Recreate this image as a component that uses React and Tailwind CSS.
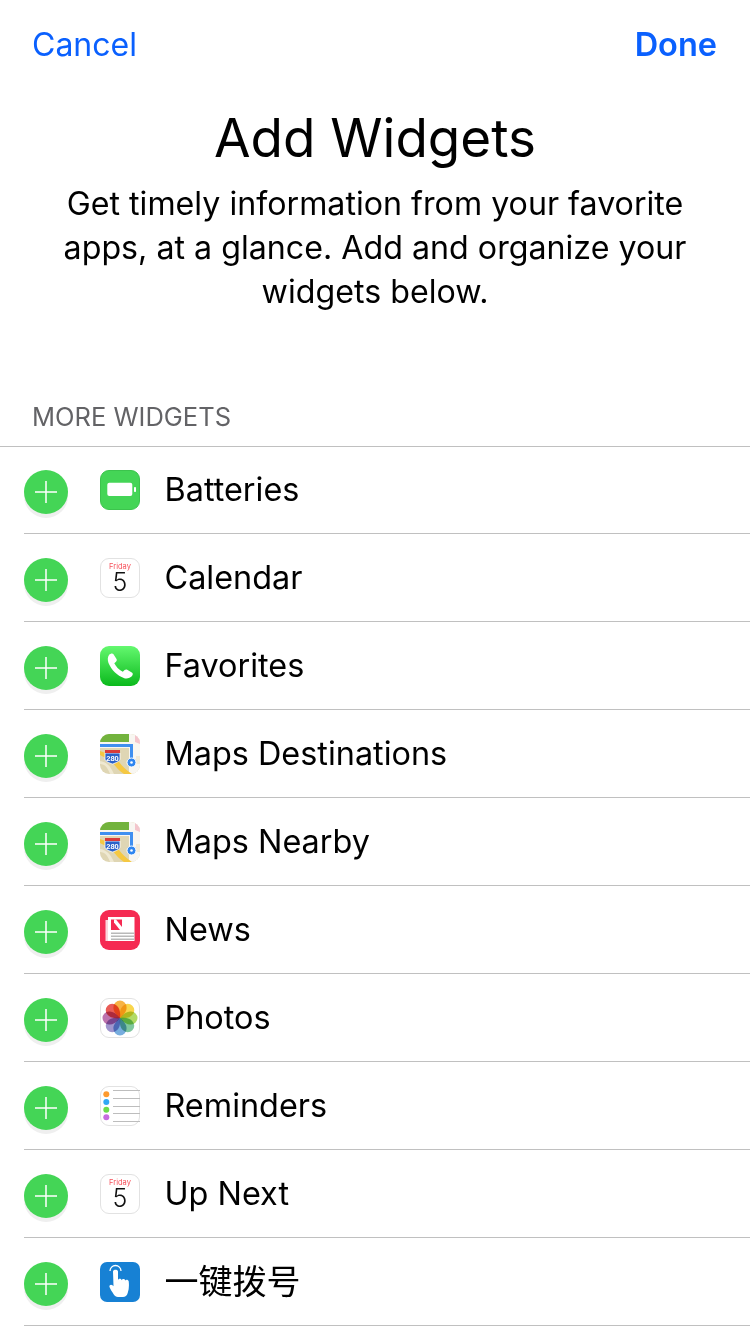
function Batteries() {
  return (
    <svg width="40" height="40" viewBox="0 0 40 40">
      <rect x="0.500" y="0.500" width="39" height="39" rx="8.500" fill="#44d556" stroke="#3cc44d" />
      <rect x="7.300" y="12.700" width="25" height="13.300" rx="2" fill="#fff" />
      <rect x="34" y="17" width="2" height="5" rx="0.800" fill="#fff" />
    </svg>
  );
}

function CalendarIcon() {
  return (
    <div className="w-10 h-10 rounded-[9px] border border-[#e2e2e2] bg-white flex flex-col items-center">
      <span className="text-[7.5px] leading-[8px] mt-[4px] text-[#f7525c]">Friday</span>
      <span className="text-[25px] leading-[23px] font-light text-[#111]">5</span>
    </div>
  );
}

function Phone() {
  return (
    <svg width="40" height="40" viewBox="0 0 40 40">
      <defs>
        <linearGradient id="ph" x1="0" y1="0" x2="0" y2="1">
          <stop offset="0" stopColor="#64f86f" />
          <stop offset="1" stopColor="#0ab91c" />
        </linearGradient>
      </defs>
      <rect width="40" height="40" rx="9" fill="url(#ph)" />
      <path d="M9 9c1.500-1.500 3.500-2 4.500-.8l3 4.800c.6 1 .2 2-.5 2.700l-1.700 1.500c1.500 3 4.500 6.500 8.500 8.500l1.800-1.600c.8-.7 1.700-.8 2.600-.3l5 3c1 .6.7 2.300-.4 3.400-1.500 1.500-4.500 3-7.500 2C17 29.500 11.500 24 8.500 17c-1-3-1-6 .5-8z" fill="#fff" />
    </svg>
  );
}

function Maps({ id }) {
  return (
    <svg width="40" height="40" viewBox="0 0 40 40">
      <defs>
        <clipPath id={id}><rect width="40" height="40" rx="9" /></clipPath>
      </defs>
      <g clipPath={`url(#${id})`}>
        <rect width="40" height="40" fill="#dfd6b4" />
        <rect width="29" height="8" fill="#72b33d" />
        <rect x="29" width="11" height="40" fill="#f8f6f1" />
        <path d="M35 0h5v10l-5-2z" fill="#f3c5cc" />
        <path d="M36 22h4v8h-4z" fill="#f3ead6" />
        <rect y="8" width="35" height="6" fill="#f8f6f1" />
        <path d="M0 10h33v20h-3V13H0z" fill="#3f8ff0" />
        <path d="M0 21c5 3 8 3 12 7 4 5 7 9 12 12h8c-6-4-10-8-13-12-5-6-11-8-19-11z" fill="#f5c842" />
        <path d="M0 30c5 0 8 4 10 10h4c-3-7-7-12-14-13z" fill="#efe9d2" />
        <path d="M5 19h15v6c0 2-4 4-7.500 5C9 29 5 27 5 25z" fill="#2a62c9" stroke="#fff" strokeWidth="0.800" />
        <rect x="5" y="16" width="15" height="3" fill="#d83b3b" />
        <text x="12.500" y="26.500" textAnchor="middle" fontSize="7.500" fontWeight="700" fill="#fff" fontFamily="Liberation Sans">280</text>
        <circle cx="31.500" cy="28.500" r="4.500" fill="#2f86f0" stroke="#fff" strokeWidth="1" />
        <circle cx="31.500" cy="28.500" r="1.300" fill="#fff" />
      </g>
    </svg>
  );
}

function News() {
  return (
    <svg width="40" height="40" viewBox="0 0 40 40">
      <rect width="40" height="40" rx="9" fill="#f52a52" />
      <rect x="5.500" y="10" width="2.500" height="21" fill="#fbd5dc" />
      <rect x="8" y="7" width="26.500" height="24" fill="#fff" />
      <rect x="11" y="9.500" width="11" height="10.500" fill="#f52a52" />
      <path d="M14 9.500h2l6 7.500v3h-2l-6-7.500z" fill="#fff" />
      <rect x="11" y="22.500" width="23.500" height="1.500" fill="#b9b9b9" />
      <rect x="11" y="25.500" width="23.500" height="1.500" fill="#b9b9b9" />
      <rect x="11" y="28.500" width="23.500" height="1.500" fill="#b9b9b9" />
    </svg>
  );
}

const petals = [
  ['#f6a623', 0], ['#f8cf2e', 45], ['#a5d34a', 90], ['#68bd8e', 135],
  ['#5f9fd8', 180], ['#8f84c6', 225], ['#b25aa0', 270], ['#e5403a', 315],
];

function Photos() {
  return (
    <svg width="40" height="40" viewBox="0 0 40 40">
      <rect x="0.500" y="0.500" width="39" height="39" rx="8.500" fill="#fff" stroke="#e2e2e2" />
      {petals.map(([c, a]) => (
        <path key={a} d="M20 20C15 16 13 12 13.500 9A6.500 6.500 0 0 1 26.500 9C27 12 25 16 20 20z" fill={c} fillOpacity="0.85" transform={`rotate(${a} 20 20)`} style={{ mixBlendMode: 'multiply' }} />
      ))}
    </svg>
  );
}

function RemindersIcon() {
  return (
    <svg width="40" height="40" viewBox="0 0 40 40">
      <rect x="0.500" y="0.500" width="39" height="39" rx="8.500" fill="#fff" stroke="#e2e2e2" />
      {[4, 12, 20, 27, 35].map(y => <rect key={y} x="13" y={y} width="27" height="1" fill="#bdbdbd" />)}
      <circle cx="6.300" cy="8.300" r="3" fill="#fd9a2e" />
      <circle cx="6.300" cy="16" r="3" fill="#30a8f5" />
      <circle cx="6.300" cy="23.700" r="3" fill="#6cdc4c" />
      <circle cx="6.300" cy="31.300" r="3" fill="#c66ce0" />
    </svg>
  );
}

function Dial() {
  return (
    <svg width="40" height="40" viewBox="0 0 40 40">
      <rect width="40" height="40" rx="7" fill="#1781d4" />
      <path d="M10 9a5.500 5.500 0 0 1 11 0" fill="none" stroke="#fff" strokeWidth="1.300" />
      <path d="M13 9.500c0-2.400 5-2.400 5 0V18c.7-1.800 3.200-1.600 3.600.2.700-1.600 3.200-1.400 3.600.2.800-1.200 3.300-.8 3.500.9.500 4 .3 8-1 11.700-.6 2.500-2.500 4-4.700 4h-5c-2 0-3.200-1-4.200-2.500-1.500-2.700-3.500-5-4.300-7.500-.5-2 1.500-3.200 3-1.700l1 1z" fill="#fff" />
    </svg>
  );
}

const rows = [
  { name: 'Batteries', icon: <Batteries /> },
  { name: 'Calendar', icon: <CalendarIcon /> },
  { name: 'Favorites', icon: <Phone /> },
  { name: 'Maps Destinations', icon: <Maps id="m1" /> },
  { name: 'Maps Nearby', icon: <Maps id="m2" /> },
  { name: 'News', icon: <News /> },
  { name: 'Photos', icon: <Photos /> },
  { name: 'Reminders', icon: <RemindersIcon /> },
  { name: 'Up Next', icon: <CalendarIcon /> },
  { name: '一键拨号', icon: <Dial />, cjk: true },
];

function AddButton() {
  return (
    <div className="w-11 h-11 rounded-full bg-[#44d556] shadow-[0_4px_0_#efefef] flex items-center justify-center shrink-0">
      <svg width="22" height="22" viewBox="0 0 22 22">
        <path d="M11 0v22M0 11h22" stroke="#fff" strokeWidth="1.500" />
      </svg>
    </div>
  );
}

export default function App() {
  return (
    <div className="w-[750px] h-[1334px] bg-white overflow-hidden text-black" style={{ fontFamily: 'Inter, "Noto Sans CJK SC", sans-serif' }}>
      <div className="flex justify-between items-center pl-[32px] pr-[33px] pt-[24px] text-[#0a60fe]">
        <span className="text-[32px] leading-[42px]">Cancel</span>
        <span className="text-[32.5px] leading-[42px] font-semibold">Done</span>
      </div>
      <h1 className="text-center text-[53px] leading-[64px] font-normal mt-[40px]">Add Widgets</h1>
      <p className="text-center text-[32.2px] leading-[44px] mt-[12px] px-[60px]">
        Get timely information from your favorite apps, at a glance. Add and organize your widgets below.
      </p>
      <div className="mt-[88px] pl-[32px] text-[25.5px] leading-[30px] text-[#636366]">MORE WIDGETS</div>
      <div className="h-px bg-[#c0c0c0] mt-[14px] -mb-px" />
      <div>
        {rows.map(({ name, icon, cjk }) => (
          <div key={name} className="h-[88px] ml-6 border-b border-[#c0c0c0] pt-6 flex items-start">
            <AddButton />
            <div className="ml-8">{icon}</div>
            <span className={`ml-[24.5px] -mt-[4px] leading-[48px] ${cjk ? 'text-[34px]' : 'text-[32.4px]'}`}>{name}</span>
          </div>
        ))}
      </div>
    </div>
  );
}
